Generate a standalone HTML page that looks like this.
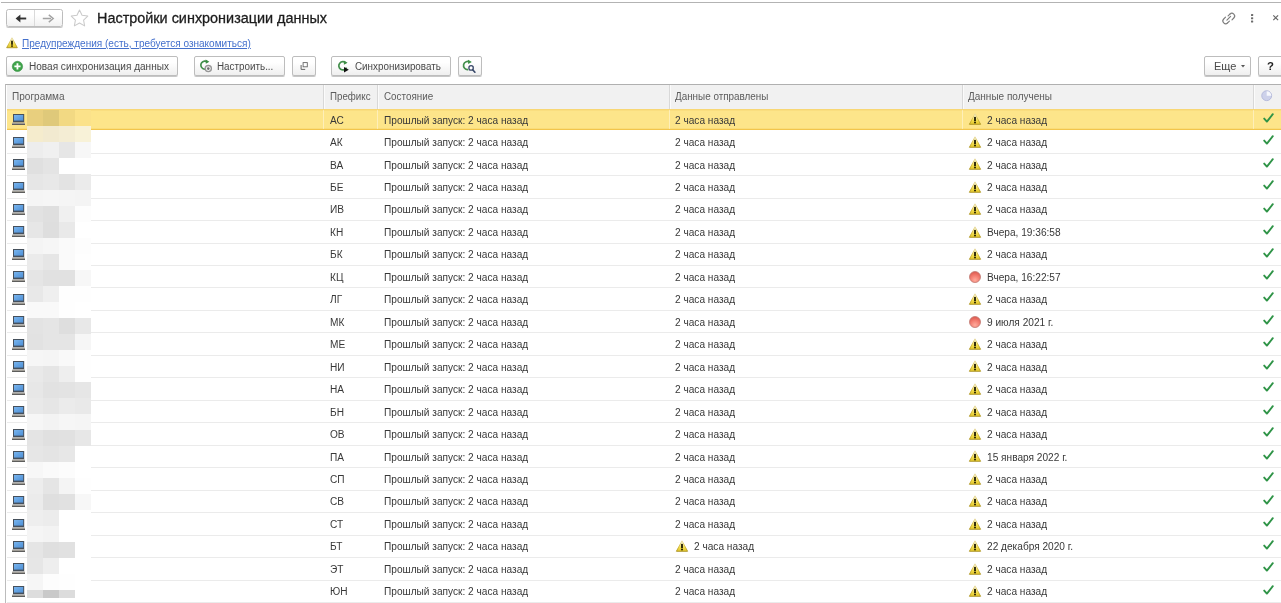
<!DOCTYPE html>
<html lang="ru"><head><meta charset="utf-8"><title>Настройки синхронизации данных</title>
<style>
html,body{margin:0;padding:0;background:#fff;}
body{-webkit-font-smoothing:antialiased;width:1281px;height:603px;overflow:hidden;position:relative;font-family:"Liberation Sans",sans-serif;color:#333;}
svg{display:block;overflow:visible}
#app{position:absolute;left:0;top:0;width:1281px;height:603px;will-change:transform;}
#topline{position:absolute;left:1px;top:2px;width:1280px;height:1px;background:#b3b3b3;}
.btn{position:absolute;box-sizing:border-box;height:19.5px;top:56.3px;border:1px solid #bdbdbd;border-radius:2px;background:linear-gradient(#fff 30%,#efefef);box-shadow:0 1px 0.5px rgba(0,0,0,.22);font-size:10.0px;color:#4a4a4a;line-height:17.5px;white-space:nowrap;}
.btn span{margin-top:0.9px}
.btn span{position:absolute;top:0;transform:scaleX(0.985);transform-origin:0 0;}
.btn svg{position:absolute}
#nav{position:absolute;left:6px;top:9.3px;width:56.5px;height:18px;box-sizing:border-box;border:1px solid #bdbdbd;border-radius:2.5px;background:linear-gradient(#fff 30%,#f1f1f1);box-shadow:0 1px 0.5px rgba(0,0,0,.22);}
#nav i{position:absolute;left:27px;top:0;width:1px;height:16px;background:#dadada;}
#nav svg{position:absolute}
#title{position:absolute;left:97px;top:8.4px;font-size:15.2px;line-height:20px;color:#1c1c1c;-webkit-text-stroke:0.3px #1c1c1c;white-space:nowrap;transform:scaleX(0.9489);transform-origin:0 0;}
#warnlink{position:absolute;left:21.6px;top:36.5px;font-size:10.0px;line-height:13px;color:#4470cc;text-decoration:underline;text-underline-offset:1px;white-space:nowrap;transform:scaleX(1.0035);transform-origin:0 0;}
#tbl{position:absolute;left:5.3px;top:84px;width:1276px;height:519px;border-left:1.4px solid #bcbcbc;border-top:1px solid #b0b0b0;box-sizing:border-box;}
#hdr{position:absolute;left:6.8px;top:85px;width:1275px;height:23.7px;background:#f1f1f1;}
.h{position:absolute;top:89.7px;font-size:10.0px;line-height:14px;color:#5c5c5c;white-space:nowrap;transform:scaleX(0.968);transform-origin:0 0;}
.vl{position:absolute;top:85px;width:1px;height:23.7px;background:#d8d8d8;box-shadow:1px 0 0 rgba(255,255,255,.7);}
.vs{position:absolute;top:110px;width:1px;height:18.5px;background:rgba(255,255,255,.4);}
.row{position:absolute;left:6.8px;width:1275px;height:22.44px;}
.hl{position:absolute;left:6.8px;width:1275px;height:1px;background:#ebebeb;}
#selbg{position:absolute;left:6.8px;top:108.7px;width:1275px;height:21px;background:#fde58a;box-shadow:inset 0 1.4px 0 #f8d774, inset 0 -1.3px 0 #f2c54c;}
.t{position:absolute;top:5.5px;font-size:10.0px;line-height:14px;color:#383838;white-space:nowrap;transform:scaleX(1.012);transform-origin:0 0;}
.pref{left:323.2px} .stat{left:376.9px} .sent{left:668.6px} .sent2{left:687.2px} .recv{left:980.6px}
.ic{position:absolute;width:12px;height:12px;top:5.3px;}
.ic.r{left:962.2px} .ic.s{left:669.2px}
.pc{position:absolute;left:5.2px;top:6.1px;width:13px;height:11px;}
.chk{position:absolute;left:1256.3px;top:4.7px;width:11px;height:10px;}
#blk i{position:absolute;width:16px;display:block;}
</style></head><body><div id="app">
<svg width="0" height="0" style="position:absolute"><defs>
<linearGradient id="wg" x1="0" y1="0" x2="0" y2="1"><stop offset="0" stop-color="#ffffff"/><stop offset="0.3" stop-color="#fbf3b0"/><stop offset="0.65" stop-color="#f1dc4c"/><stop offset="1" stop-color="#e2c427"/></linearGradient><linearGradient id="ws" x1="0" y1="0" x2="0" y2="1"><stop offset="0" stop-color="#e6d9a0"/><stop offset="0.6" stop-color="#d3b634"/><stop offset="1" stop-color="#a8901e"/></linearGradient>
<radialGradient id="rg" cx="0.5" cy="0.78" r="0.8"><stop offset="0" stop-color="#ffab9c"/><stop offset="0.55" stop-color="#f27a6e"/><stop offset="1" stop-color="#d9564c"/></radialGradient>
<linearGradient id="pg" x1="0" y1="0" x2="1" y2="1"><stop offset="0" stop-color="#79b5ee"/><stop offset="1" stop-color="#4d8fd6"/></linearGradient>
</defs></svg>
<div id="topline"></div>
<div id="nav"><i></i>
<svg style="left:7.6px;top:3.5px" width="12" height="9" viewBox="0 0 12 9"><path d="M11.2 4.5H3" fill="none" stroke="#333" stroke-width="1.9"/><path d="M5.4 0.6L0.6 4.5l4.8 3.9z" fill="#333"/></svg>
<svg style="left:35px;top:3.5px" width="12" height="9" viewBox="0 0 12 9"><path d="M0.8 4.5H9" fill="none" stroke="#a2a2a2" stroke-width="1.5"/><path d="M6.8 0.9L11.2 4.5 6.8 8.1" fill="none" stroke="#a2a2a2" stroke-width="1.4"/></svg>
</div>
<svg style="position:absolute;left:70.4px;top:9.4px" width="19" height="17.6" viewBox="0 0 18 17"><path d="M9 1l2.45 5.1 5.55.75-4.05 3.9 1 5.55L9 13.6l-4.95 2.7 1-5.55L1 6.85l5.55-.75z" fill="#fff" stroke="#cacaca" stroke-width="1" stroke-linejoin="round"/></svg>
<div id="title">Настройки синхронизации данных</div>
<svg style="position:absolute;left:5.5px;top:36.6px;width:12px;height:11.4px" viewBox="0 0 12 12"><path d="M6 0.8 L11.6 11.3 H0.4 Z" fill="url(#wg)" stroke="url(#ws)" stroke-width="0.9" stroke-linejoin="round"/><rect x="5.1" y="3.9" width="1.8" height="4.3" fill="#1f1a00"/><rect x="5.1" y="8.8" width="1.8" height="1.5" fill="#1f1a00"/></svg>
<div id="warnlink">Предупреждения (есть, требуется ознакомиться)</div>

<div class="btn" style="left:6px;width:172.3px"><svg style="left:4.9px;top:3.8px" width="10.9" height="10.8" viewBox="0 0 12 12" preserveAspectRatio="none"><circle cx="6" cy="6" r="5.7" fill="#3fa44a" stroke="#2f8a3b" stroke-width="0.6"/><path d="M6 2.6v6.8M2.6 6h6.8" stroke="#fff" stroke-width="2"/></svg><span style="left:21.6px;transform:scaleX(1.004)">Новая синхронизация данных</span></div>

<div class="btn" style="left:194.2px;width:91px"><svg style="left:3.9px;top:2.2px" width="14" height="14" viewBox="0 0 14 14"><path d="M8.6 3A4.1 4.1 0 1 0 9.6 8" fill="none" stroke="#438f4c" stroke-width="1.7"/><path d="M6.6 0.6l3.8 2.2-3.6 2z" fill="#3c8f45"/><circle cx="9.3" cy="9.6" r="3.1" fill="#f4f4f4" stroke="#969696" stroke-width="1.3"/><circle cx="9.3" cy="9.6" r="1.3" fill="#6a6a6a"/></svg><span style="left:21.9px">Настроить...</span></div>

<div class="btn" style="left:292px;width:24px"><svg style="left:7px;top:4.4px" width="9" height="9" viewBox="0 0 9 9"><rect x="3.1" y="0.6" width="4.2" height="4.2" fill="#fff" stroke="#666" stroke-width="0.9"/><path d="M1.1 3v4.4h4.1" fill="none" stroke="#666" stroke-width="1"/></svg></div>

<div class="btn" style="left:330.7px;width:120.2px"><svg style="left:4.9px;top:2.8px" width="13" height="13" viewBox="0 0 13 13"><path d="M8.9 3A4.1 4.1 0 1 0 9.6 7.6" fill="none" stroke="#438f4c" stroke-width="1.7"/><path d="M6.8 0.4l3.8 2.4-3.7 2z" fill="#3c8f45"/><path d="M7 7.1l4.8 2.6-4.8 2.7z" fill="#111"/></svg><span style="left:23.3px">Синхронизировать</span></div>

<div class="btn" style="left:458px;width:23.6px"><svg style="left:2.4px;top:2px" width="15" height="15" viewBox="0 0 15 15"><path d="M9 3.2A4.1 4.1 0 1 0 7.2 10.6" fill="none" stroke="#438f4c" stroke-width="1.7"/><path d="M7 0.8l3.8 2.2-3.6 2z" fill="#3c8f45"/><circle cx="10.1" cy="8.9" r="2.2" fill="#fff" stroke="#39496a" stroke-width="1.3"/><path d="M11.7 10.7l2.2 2.5" stroke="#39496a" stroke-width="1.7" stroke-linecap="round"/></svg></div>

<div class="btn" style="left:1203.5px;width:47px"><span style="left:9.6px;transform:scaleX(1.1)">Еще</span><svg style="left:36.4px;top:8.2px" width="4" height="2.4" viewBox="0 0 5 3"><path d="M0 0h5L2.5 3z" fill="#555"/></svg></div>
<div class="btn" style="left:1257.7px;width:26px"><span style="left:8px;font-weight:bold;font-size:11.5px;color:#222">?</span></div>

<svg style="position:absolute;left:1222px;top:11.5px" width="13.5" height="13" viewBox="0 0 13.5 13"><g fill="none" stroke="#7d7d7d" stroke-width="1.15" stroke-linecap="round"><path d="M5.6 10.9A2.75 2.75 0 0 1 1.7 7L3.5 5.2"/><path d="M7.4 9.1L5.6 10.9" /><path d="M7.9 2.1A2.75 2.75 0 0 1 11.8 6L10 7.8"/><path d="M6.1 3.9L7.9 2.1"/><path d="M4.9 8.1L8.6 4.4"/></g></svg>
<svg style="position:absolute;left:1250.8px;top:13.9px" width="2.2" height="8.6" viewBox="0 0 2.2 8.6"><rect x="0" y="0" width="2.2" height="2.1" rx=".6" fill="#6c6c6c"/><rect x="0" y="3.25" width="2.2" height="2.1" rx=".6" fill="#6c6c6c"/><rect x="0" y="6.5" width="2.2" height="2.1" rx=".6" fill="#6c6c6c"/></svg>
<svg style="position:absolute;left:1272.8px;top:15.3px" width="5.4" height="5.4" viewBox="0 0 5.4 5.4"><path d="M0.3 0.3l4.8 4.8M5.1 0.3L0.3 5.1" stroke="#666" stroke-width="1.2"/></svg>

<div id="tbl"></div>
<div id="hdr"></div>
<div class="h" style="left:12.4px;transform:scaleX(1.004)">Программа</div><div class="h" style="left:330px;transform:scaleX(.975)">Префикс</div><div class="h" style="left:383.6px;transform:scaleX(.986)">Состояние</div><div class="h" style="left:675.4px;transform:scaleX(.987)">Данные отправлены</div><div class="h" style="left:968.4px;transform:scaleX(1.001)">Данные получены</div>
<svg style="position:absolute;left:1261.4px;top:90.2px" width="11.4" height="11.4" viewBox="0 0 12 12"><circle cx="6" cy="6" r="5.2" fill="#cdd1ea" stroke="#b4b9da" stroke-width="1"/><path d="M6 6V1.2A4.8 4.8 0 0 1 10.8 6z" fill="#f6f7fc"/></svg>
<div id="selbg"></div>
<div class="row sel" style="top:108.07px"><svg class="pc" viewBox="0 0 13 11"><rect x="1" y="0" width="11.2" height="8.4" fill="#46505c"/><rect x="2" y="1" width="9.2" height="5.6" fill="url(#pg)"/><rect x="0" y="8.6" width="13" height="2.3" fill="#aaa69f"/><rect x="0" y="9.9" width="13" height="1" fill="#555"/></svg><span class="t pref">АС</span><span class="t stat">Прошлый запуск: 2 часа назад</span><span class="t sent">2 часа назад</span><svg class="ic r" viewBox="0 0 12 12"><path d="M6 0.8 L11.6 11.3 H0.4 Z" fill="url(#wg)" stroke="url(#ws)" stroke-width="0.9" stroke-linejoin="round"/><rect x="5.1" y="3.9" width="1.8" height="4.3" fill="#1f1a00"/><rect x="5.1" y="8.8" width="1.8" height="1.5" fill="#1f1a00"/></svg><span class="t recv">2 часа назад</span><svg class="chk" viewBox="0 0 11 10"><path d="M1.2 5.6 L3.9 8.6 L9.8 1.2" fill="none" stroke="#2f9447" stroke-width="1.9" stroke-linecap="round" stroke-linejoin="round"/></svg></div>
<div class="row" style="top:130.53px"><svg class="pc" viewBox="0 0 13 11"><rect x="1" y="0" width="11.2" height="8.4" fill="#46505c"/><rect x="2" y="1" width="9.2" height="5.6" fill="url(#pg)"/><rect x="0" y="8.6" width="13" height="2.3" fill="#aaa69f"/><rect x="0" y="9.9" width="13" height="1" fill="#555"/></svg><span class="t pref">АК</span><span class="t stat">Прошлый запуск: 2 часа назад</span><span class="t sent">2 часа назад</span><svg class="ic r" viewBox="0 0 12 12"><path d="M6 0.8 L11.6 11.3 H0.4 Z" fill="url(#wg)" stroke="url(#ws)" stroke-width="0.9" stroke-linejoin="round"/><rect x="5.1" y="3.9" width="1.8" height="4.3" fill="#1f1a00"/><rect x="5.1" y="8.8" width="1.8" height="1.5" fill="#1f1a00"/></svg><span class="t recv">2 часа назад</span><svg class="chk" viewBox="0 0 11 10"><path d="M1.2 5.6 L3.9 8.6 L9.8 1.2" fill="none" stroke="#2f9447" stroke-width="1.9" stroke-linecap="round" stroke-linejoin="round"/></svg></div>
<div class="row" style="top:153.00px"><svg class="pc" viewBox="0 0 13 11"><rect x="1" y="0" width="11.2" height="8.4" fill="#46505c"/><rect x="2" y="1" width="9.2" height="5.6" fill="url(#pg)"/><rect x="0" y="8.6" width="13" height="2.3" fill="#aaa69f"/><rect x="0" y="9.9" width="13" height="1" fill="#555"/></svg><span class="t pref">ВА</span><span class="t stat">Прошлый запуск: 2 часа назад</span><span class="t sent">2 часа назад</span><svg class="ic r" viewBox="0 0 12 12"><path d="M6 0.8 L11.6 11.3 H0.4 Z" fill="url(#wg)" stroke="url(#ws)" stroke-width="0.9" stroke-linejoin="round"/><rect x="5.1" y="3.9" width="1.8" height="4.3" fill="#1f1a00"/><rect x="5.1" y="8.8" width="1.8" height="1.5" fill="#1f1a00"/></svg><span class="t recv">2 часа назад</span><svg class="chk" viewBox="0 0 11 10"><path d="M1.2 5.6 L3.9 8.6 L9.8 1.2" fill="none" stroke="#2f9447" stroke-width="1.9" stroke-linecap="round" stroke-linejoin="round"/></svg></div>
<div class="row" style="top:175.46px"><svg class="pc" viewBox="0 0 13 11"><rect x="1" y="0" width="11.2" height="8.4" fill="#46505c"/><rect x="2" y="1" width="9.2" height="5.6" fill="url(#pg)"/><rect x="0" y="8.6" width="13" height="2.3" fill="#aaa69f"/><rect x="0" y="9.9" width="13" height="1" fill="#555"/></svg><span class="t pref">БЕ</span><span class="t stat">Прошлый запуск: 2 часа назад</span><span class="t sent">2 часа назад</span><svg class="ic r" viewBox="0 0 12 12"><path d="M6 0.8 L11.6 11.3 H0.4 Z" fill="url(#wg)" stroke="url(#ws)" stroke-width="0.9" stroke-linejoin="round"/><rect x="5.1" y="3.9" width="1.8" height="4.3" fill="#1f1a00"/><rect x="5.1" y="8.8" width="1.8" height="1.5" fill="#1f1a00"/></svg><span class="t recv">2 часа назад</span><svg class="chk" viewBox="0 0 11 10"><path d="M1.2 5.6 L3.9 8.6 L9.8 1.2" fill="none" stroke="#2f9447" stroke-width="1.9" stroke-linecap="round" stroke-linejoin="round"/></svg></div>
<div class="row" style="top:197.93px"><svg class="pc" viewBox="0 0 13 11"><rect x="1" y="0" width="11.2" height="8.4" fill="#46505c"/><rect x="2" y="1" width="9.2" height="5.6" fill="url(#pg)"/><rect x="0" y="8.6" width="13" height="2.3" fill="#aaa69f"/><rect x="0" y="9.9" width="13" height="1" fill="#555"/></svg><span class="t pref">ИВ</span><span class="t stat">Прошлый запуск: 2 часа назад</span><span class="t sent">2 часа назад</span><svg class="ic r" viewBox="0 0 12 12"><path d="M6 0.8 L11.6 11.3 H0.4 Z" fill="url(#wg)" stroke="url(#ws)" stroke-width="0.9" stroke-linejoin="round"/><rect x="5.1" y="3.9" width="1.8" height="4.3" fill="#1f1a00"/><rect x="5.1" y="8.8" width="1.8" height="1.5" fill="#1f1a00"/></svg><span class="t recv">2 часа назад</span><svg class="chk" viewBox="0 0 11 10"><path d="M1.2 5.6 L3.9 8.6 L9.8 1.2" fill="none" stroke="#2f9447" stroke-width="1.9" stroke-linecap="round" stroke-linejoin="round"/></svg></div>
<div class="row" style="top:220.39px"><svg class="pc" viewBox="0 0 13 11"><rect x="1" y="0" width="11.2" height="8.4" fill="#46505c"/><rect x="2" y="1" width="9.2" height="5.6" fill="url(#pg)"/><rect x="0" y="8.6" width="13" height="2.3" fill="#aaa69f"/><rect x="0" y="9.9" width="13" height="1" fill="#555"/></svg><span class="t pref">КН</span><span class="t stat">Прошлый запуск: 2 часа назад</span><span class="t sent">2 часа назад</span><svg class="ic r" viewBox="0 0 12 12"><path d="M6 0.8 L11.6 11.3 H0.4 Z" fill="url(#wg)" stroke="url(#ws)" stroke-width="0.9" stroke-linejoin="round"/><rect x="5.1" y="3.9" width="1.8" height="4.3" fill="#1f1a00"/><rect x="5.1" y="8.8" width="1.8" height="1.5" fill="#1f1a00"/></svg><span class="t recv">Вчера, 19:36:58</span><svg class="chk" viewBox="0 0 11 10"><path d="M1.2 5.6 L3.9 8.6 L9.8 1.2" fill="none" stroke="#2f9447" stroke-width="1.9" stroke-linecap="round" stroke-linejoin="round"/></svg></div>
<div class="row" style="top:242.86px"><svg class="pc" viewBox="0 0 13 11"><rect x="1" y="0" width="11.2" height="8.4" fill="#46505c"/><rect x="2" y="1" width="9.2" height="5.6" fill="url(#pg)"/><rect x="0" y="8.6" width="13" height="2.3" fill="#aaa69f"/><rect x="0" y="9.9" width="13" height="1" fill="#555"/></svg><span class="t pref">БК</span><span class="t stat">Прошлый запуск: 2 часа назад</span><span class="t sent">2 часа назад</span><svg class="ic r" viewBox="0 0 12 12"><path d="M6 0.8 L11.6 11.3 H0.4 Z" fill="url(#wg)" stroke="url(#ws)" stroke-width="0.9" stroke-linejoin="round"/><rect x="5.1" y="3.9" width="1.8" height="4.3" fill="#1f1a00"/><rect x="5.1" y="8.8" width="1.8" height="1.5" fill="#1f1a00"/></svg><span class="t recv">2 часа назад</span><svg class="chk" viewBox="0 0 11 10"><path d="M1.2 5.6 L3.9 8.6 L9.8 1.2" fill="none" stroke="#2f9447" stroke-width="1.9" stroke-linecap="round" stroke-linejoin="round"/></svg></div>
<div class="row" style="top:265.32px"><svg class="pc" viewBox="0 0 13 11"><rect x="1" y="0" width="11.2" height="8.4" fill="#46505c"/><rect x="2" y="1" width="9.2" height="5.6" fill="url(#pg)"/><rect x="0" y="8.6" width="13" height="2.3" fill="#aaa69f"/><rect x="0" y="9.9" width="13" height="1" fill="#555"/></svg><span class="t pref">КЦ</span><span class="t stat">Прошлый запуск: 2 часа назад</span><span class="t sent">2 часа назад</span><svg class="ic r" viewBox="0 0 12 12"><circle cx="6" cy="6" r="5.5" fill="url(#rg)" stroke="#bf7a72" stroke-width="0.8"/></svg><span class="t recv">Вчера, 16:22:57</span><svg class="chk" viewBox="0 0 11 10"><path d="M1.2 5.6 L3.9 8.6 L9.8 1.2" fill="none" stroke="#2f9447" stroke-width="1.9" stroke-linecap="round" stroke-linejoin="round"/></svg></div>
<div class="row" style="top:287.79px"><svg class="pc" viewBox="0 0 13 11"><rect x="1" y="0" width="11.2" height="8.4" fill="#46505c"/><rect x="2" y="1" width="9.2" height="5.6" fill="url(#pg)"/><rect x="0" y="8.6" width="13" height="2.3" fill="#aaa69f"/><rect x="0" y="9.9" width="13" height="1" fill="#555"/></svg><span class="t pref">ЛГ</span><span class="t stat">Прошлый запуск: 2 часа назад</span><span class="t sent">2 часа назад</span><svg class="ic r" viewBox="0 0 12 12"><path d="M6 0.8 L11.6 11.3 H0.4 Z" fill="url(#wg)" stroke="url(#ws)" stroke-width="0.9" stroke-linejoin="round"/><rect x="5.1" y="3.9" width="1.8" height="4.3" fill="#1f1a00"/><rect x="5.1" y="8.8" width="1.8" height="1.5" fill="#1f1a00"/></svg><span class="t recv">2 часа назад</span><svg class="chk" viewBox="0 0 11 10"><path d="M1.2 5.6 L3.9 8.6 L9.8 1.2" fill="none" stroke="#2f9447" stroke-width="1.9" stroke-linecap="round" stroke-linejoin="round"/></svg></div>
<div class="row" style="top:310.25px"><svg class="pc" viewBox="0 0 13 11"><rect x="1" y="0" width="11.2" height="8.4" fill="#46505c"/><rect x="2" y="1" width="9.2" height="5.6" fill="url(#pg)"/><rect x="0" y="8.6" width="13" height="2.3" fill="#aaa69f"/><rect x="0" y="9.9" width="13" height="1" fill="#555"/></svg><span class="t pref">МК</span><span class="t stat">Прошлый запуск: 2 часа назад</span><span class="t sent">2 часа назад</span><svg class="ic r" viewBox="0 0 12 12"><circle cx="6" cy="6" r="5.5" fill="url(#rg)" stroke="#bf7a72" stroke-width="0.8"/></svg><span class="t recv">9 июля 2021 г.</span><svg class="chk" viewBox="0 0 11 10"><path d="M1.2 5.6 L3.9 8.6 L9.8 1.2" fill="none" stroke="#2f9447" stroke-width="1.9" stroke-linecap="round" stroke-linejoin="round"/></svg></div>
<div class="row" style="top:332.72px"><svg class="pc" viewBox="0 0 13 11"><rect x="1" y="0" width="11.2" height="8.4" fill="#46505c"/><rect x="2" y="1" width="9.2" height="5.6" fill="url(#pg)"/><rect x="0" y="8.6" width="13" height="2.3" fill="#aaa69f"/><rect x="0" y="9.9" width="13" height="1" fill="#555"/></svg><span class="t pref">МЕ</span><span class="t stat">Прошлый запуск: 2 часа назад</span><span class="t sent">2 часа назад</span><svg class="ic r" viewBox="0 0 12 12"><path d="M6 0.8 L11.6 11.3 H0.4 Z" fill="url(#wg)" stroke="url(#ws)" stroke-width="0.9" stroke-linejoin="round"/><rect x="5.1" y="3.9" width="1.8" height="4.3" fill="#1f1a00"/><rect x="5.1" y="8.8" width="1.8" height="1.5" fill="#1f1a00"/></svg><span class="t recv">2 часа назад</span><svg class="chk" viewBox="0 0 11 10"><path d="M1.2 5.6 L3.9 8.6 L9.8 1.2" fill="none" stroke="#2f9447" stroke-width="1.9" stroke-linecap="round" stroke-linejoin="round"/></svg></div>
<div class="row" style="top:355.19px"><svg class="pc" viewBox="0 0 13 11"><rect x="1" y="0" width="11.2" height="8.4" fill="#46505c"/><rect x="2" y="1" width="9.2" height="5.6" fill="url(#pg)"/><rect x="0" y="8.6" width="13" height="2.3" fill="#aaa69f"/><rect x="0" y="9.9" width="13" height="1" fill="#555"/></svg><span class="t pref">НИ</span><span class="t stat">Прошлый запуск: 2 часа назад</span><span class="t sent">2 часа назад</span><svg class="ic r" viewBox="0 0 12 12"><path d="M6 0.8 L11.6 11.3 H0.4 Z" fill="url(#wg)" stroke="url(#ws)" stroke-width="0.9" stroke-linejoin="round"/><rect x="5.1" y="3.9" width="1.8" height="4.3" fill="#1f1a00"/><rect x="5.1" y="8.8" width="1.8" height="1.5" fill="#1f1a00"/></svg><span class="t recv">2 часа назад</span><svg class="chk" viewBox="0 0 11 10"><path d="M1.2 5.6 L3.9 8.6 L9.8 1.2" fill="none" stroke="#2f9447" stroke-width="1.9" stroke-linecap="round" stroke-linejoin="round"/></svg></div>
<div class="row" style="top:377.65px"><svg class="pc" viewBox="0 0 13 11"><rect x="1" y="0" width="11.2" height="8.4" fill="#46505c"/><rect x="2" y="1" width="9.2" height="5.6" fill="url(#pg)"/><rect x="0" y="8.6" width="13" height="2.3" fill="#aaa69f"/><rect x="0" y="9.9" width="13" height="1" fill="#555"/></svg><span class="t pref">НА</span><span class="t stat">Прошлый запуск: 2 часа назад</span><span class="t sent">2 часа назад</span><svg class="ic r" viewBox="0 0 12 12"><path d="M6 0.8 L11.6 11.3 H0.4 Z" fill="url(#wg)" stroke="url(#ws)" stroke-width="0.9" stroke-linejoin="round"/><rect x="5.1" y="3.9" width="1.8" height="4.3" fill="#1f1a00"/><rect x="5.1" y="8.8" width="1.8" height="1.5" fill="#1f1a00"/></svg><span class="t recv">2 часа назад</span><svg class="chk" viewBox="0 0 11 10"><path d="M1.2 5.6 L3.9 8.6 L9.8 1.2" fill="none" stroke="#2f9447" stroke-width="1.9" stroke-linecap="round" stroke-linejoin="round"/></svg></div>
<div class="row" style="top:400.12px"><svg class="pc" viewBox="0 0 13 11"><rect x="1" y="0" width="11.2" height="8.4" fill="#46505c"/><rect x="2" y="1" width="9.2" height="5.6" fill="url(#pg)"/><rect x="0" y="8.6" width="13" height="2.3" fill="#aaa69f"/><rect x="0" y="9.9" width="13" height="1" fill="#555"/></svg><span class="t pref">БН</span><span class="t stat">Прошлый запуск: 2 часа назад</span><span class="t sent">2 часа назад</span><svg class="ic r" viewBox="0 0 12 12"><path d="M6 0.8 L11.6 11.3 H0.4 Z" fill="url(#wg)" stroke="url(#ws)" stroke-width="0.9" stroke-linejoin="round"/><rect x="5.1" y="3.9" width="1.8" height="4.3" fill="#1f1a00"/><rect x="5.1" y="8.8" width="1.8" height="1.5" fill="#1f1a00"/></svg><span class="t recv">2 часа назад</span><svg class="chk" viewBox="0 0 11 10"><path d="M1.2 5.6 L3.9 8.6 L9.8 1.2" fill="none" stroke="#2f9447" stroke-width="1.9" stroke-linecap="round" stroke-linejoin="round"/></svg></div>
<div class="row" style="top:422.58px"><svg class="pc" viewBox="0 0 13 11"><rect x="1" y="0" width="11.2" height="8.4" fill="#46505c"/><rect x="2" y="1" width="9.2" height="5.6" fill="url(#pg)"/><rect x="0" y="8.6" width="13" height="2.3" fill="#aaa69f"/><rect x="0" y="9.9" width="13" height="1" fill="#555"/></svg><span class="t pref">ОВ</span><span class="t stat">Прошлый запуск: 2 часа назад</span><span class="t sent">2 часа назад</span><svg class="ic r" viewBox="0 0 12 12"><path d="M6 0.8 L11.6 11.3 H0.4 Z" fill="url(#wg)" stroke="url(#ws)" stroke-width="0.9" stroke-linejoin="round"/><rect x="5.1" y="3.9" width="1.8" height="4.3" fill="#1f1a00"/><rect x="5.1" y="8.8" width="1.8" height="1.5" fill="#1f1a00"/></svg><span class="t recv">2 часа назад</span><svg class="chk" viewBox="0 0 11 10"><path d="M1.2 5.6 L3.9 8.6 L9.8 1.2" fill="none" stroke="#2f9447" stroke-width="1.9" stroke-linecap="round" stroke-linejoin="round"/></svg></div>
<div class="row" style="top:445.05px"><svg class="pc" viewBox="0 0 13 11"><rect x="1" y="0" width="11.2" height="8.4" fill="#46505c"/><rect x="2" y="1" width="9.2" height="5.6" fill="url(#pg)"/><rect x="0" y="8.6" width="13" height="2.3" fill="#aaa69f"/><rect x="0" y="9.9" width="13" height="1" fill="#555"/></svg><span class="t pref">ПА</span><span class="t stat">Прошлый запуск: 2 часа назад</span><span class="t sent">2 часа назад</span><svg class="ic r" viewBox="0 0 12 12"><path d="M6 0.8 L11.6 11.3 H0.4 Z" fill="url(#wg)" stroke="url(#ws)" stroke-width="0.9" stroke-linejoin="round"/><rect x="5.1" y="3.9" width="1.8" height="4.3" fill="#1f1a00"/><rect x="5.1" y="8.8" width="1.8" height="1.5" fill="#1f1a00"/></svg><span class="t recv">15 января 2022 г.</span><svg class="chk" viewBox="0 0 11 10"><path d="M1.2 5.6 L3.9 8.6 L9.8 1.2" fill="none" stroke="#2f9447" stroke-width="1.9" stroke-linecap="round" stroke-linejoin="round"/></svg></div>
<div class="row" style="top:467.51px"><svg class="pc" viewBox="0 0 13 11"><rect x="1" y="0" width="11.2" height="8.4" fill="#46505c"/><rect x="2" y="1" width="9.2" height="5.6" fill="url(#pg)"/><rect x="0" y="8.6" width="13" height="2.3" fill="#aaa69f"/><rect x="0" y="9.9" width="13" height="1" fill="#555"/></svg><span class="t pref">СП</span><span class="t stat">Прошлый запуск: 2 часа назад</span><span class="t sent">2 часа назад</span><svg class="ic r" viewBox="0 0 12 12"><path d="M6 0.8 L11.6 11.3 H0.4 Z" fill="url(#wg)" stroke="url(#ws)" stroke-width="0.9" stroke-linejoin="round"/><rect x="5.1" y="3.9" width="1.8" height="4.3" fill="#1f1a00"/><rect x="5.1" y="8.8" width="1.8" height="1.5" fill="#1f1a00"/></svg><span class="t recv">2 часа назад</span><svg class="chk" viewBox="0 0 11 10"><path d="M1.2 5.6 L3.9 8.6 L9.8 1.2" fill="none" stroke="#2f9447" stroke-width="1.9" stroke-linecap="round" stroke-linejoin="round"/></svg></div>
<div class="row" style="top:489.97px"><svg class="pc" viewBox="0 0 13 11"><rect x="1" y="0" width="11.2" height="8.4" fill="#46505c"/><rect x="2" y="1" width="9.2" height="5.6" fill="url(#pg)"/><rect x="0" y="8.6" width="13" height="2.3" fill="#aaa69f"/><rect x="0" y="9.9" width="13" height="1" fill="#555"/></svg><span class="t pref">СВ</span><span class="t stat">Прошлый запуск: 2 часа назад</span><span class="t sent">2 часа назад</span><svg class="ic r" viewBox="0 0 12 12"><path d="M6 0.8 L11.6 11.3 H0.4 Z" fill="url(#wg)" stroke="url(#ws)" stroke-width="0.9" stroke-linejoin="round"/><rect x="5.1" y="3.9" width="1.8" height="4.3" fill="#1f1a00"/><rect x="5.1" y="8.8" width="1.8" height="1.5" fill="#1f1a00"/></svg><span class="t recv">2 часа назад</span><svg class="chk" viewBox="0 0 11 10"><path d="M1.2 5.6 L3.9 8.6 L9.8 1.2" fill="none" stroke="#2f9447" stroke-width="1.9" stroke-linecap="round" stroke-linejoin="round"/></svg></div>
<div class="row" style="top:512.44px"><svg class="pc" viewBox="0 0 13 11"><rect x="1" y="0" width="11.2" height="8.4" fill="#46505c"/><rect x="2" y="1" width="9.2" height="5.6" fill="url(#pg)"/><rect x="0" y="8.6" width="13" height="2.3" fill="#aaa69f"/><rect x="0" y="9.9" width="13" height="1" fill="#555"/></svg><span class="t pref">СТ</span><span class="t stat">Прошлый запуск: 2 часа назад</span><span class="t sent">2 часа назад</span><svg class="ic r" viewBox="0 0 12 12"><path d="M6 0.8 L11.6 11.3 H0.4 Z" fill="url(#wg)" stroke="url(#ws)" stroke-width="0.9" stroke-linejoin="round"/><rect x="5.1" y="3.9" width="1.8" height="4.3" fill="#1f1a00"/><rect x="5.1" y="8.8" width="1.8" height="1.5" fill="#1f1a00"/></svg><span class="t recv">2 часа назад</span><svg class="chk" viewBox="0 0 11 10"><path d="M1.2 5.6 L3.9 8.6 L9.8 1.2" fill="none" stroke="#2f9447" stroke-width="1.9" stroke-linecap="round" stroke-linejoin="round"/></svg></div>
<div class="row" style="top:534.90px"><svg class="pc" viewBox="0 0 13 11"><rect x="1" y="0" width="11.2" height="8.4" fill="#46505c"/><rect x="2" y="1" width="9.2" height="5.6" fill="url(#pg)"/><rect x="0" y="8.6" width="13" height="2.3" fill="#aaa69f"/><rect x="0" y="9.9" width="13" height="1" fill="#555"/></svg><span class="t pref">БТ</span><span class="t stat">Прошлый запуск: 2 часа назад</span><svg class="ic s" viewBox="0 0 12 12"><path d="M6 0.8 L11.6 11.3 H0.4 Z" fill="url(#wg)" stroke="url(#ws)" stroke-width="0.9" stroke-linejoin="round"/><rect x="5.1" y="3.9" width="1.8" height="4.3" fill="#1f1a00"/><rect x="5.1" y="8.8" width="1.8" height="1.5" fill="#1f1a00"/></svg><span class="t sent2">2 часа назад</span><svg class="ic r" viewBox="0 0 12 12"><path d="M6 0.8 L11.6 11.3 H0.4 Z" fill="url(#wg)" stroke="url(#ws)" stroke-width="0.9" stroke-linejoin="round"/><rect x="5.1" y="3.9" width="1.8" height="4.3" fill="#1f1a00"/><rect x="5.1" y="8.8" width="1.8" height="1.5" fill="#1f1a00"/></svg><span class="t recv">22 декабря 2020 г.</span><svg class="chk" viewBox="0 0 11 10"><path d="M1.2 5.6 L3.9 8.6 L9.8 1.2" fill="none" stroke="#2f9447" stroke-width="1.9" stroke-linecap="round" stroke-linejoin="round"/></svg></div>
<div class="row" style="top:557.37px"><svg class="pc" viewBox="0 0 13 11"><rect x="1" y="0" width="11.2" height="8.4" fill="#46505c"/><rect x="2" y="1" width="9.2" height="5.6" fill="url(#pg)"/><rect x="0" y="8.6" width="13" height="2.3" fill="#aaa69f"/><rect x="0" y="9.9" width="13" height="1" fill="#555"/></svg><span class="t pref">ЭТ</span><span class="t stat">Прошлый запуск: 2 часа назад</span><span class="t sent">2 часа назад</span><svg class="ic r" viewBox="0 0 12 12"><path d="M6 0.8 L11.6 11.3 H0.4 Z" fill="url(#wg)" stroke="url(#ws)" stroke-width="0.9" stroke-linejoin="round"/><rect x="5.1" y="3.9" width="1.8" height="4.3" fill="#1f1a00"/><rect x="5.1" y="8.8" width="1.8" height="1.5" fill="#1f1a00"/></svg><span class="t recv">2 часа назад</span><svg class="chk" viewBox="0 0 11 10"><path d="M1.2 5.6 L3.9 8.6 L9.8 1.2" fill="none" stroke="#2f9447" stroke-width="1.9" stroke-linecap="round" stroke-linejoin="round"/></svg></div>
<div class="row" style="top:579.84px"><svg class="pc" viewBox="0 0 13 11"><rect x="1" y="0" width="11.2" height="8.4" fill="#46505c"/><rect x="2" y="1" width="9.2" height="5.6" fill="url(#pg)"/><rect x="0" y="8.6" width="13" height="2.3" fill="#aaa69f"/><rect x="0" y="9.9" width="13" height="1" fill="#555"/></svg><span class="t pref">ЮН</span><span class="t stat">Прошлый запуск: 2 часа назад</span><span class="t sent">2 часа назад</span><svg class="ic r" viewBox="0 0 12 12"><path d="M6 0.8 L11.6 11.3 H0.4 Z" fill="url(#wg)" stroke="url(#ws)" stroke-width="0.9" stroke-linejoin="round"/><rect x="5.1" y="3.9" width="1.8" height="4.3" fill="#1f1a00"/><rect x="5.1" y="8.8" width="1.8" height="1.5" fill="#1f1a00"/></svg><span class="t recv">2 часа назад</span><svg class="chk" viewBox="0 0 11 10"><path d="M1.2 5.6 L3.9 8.6 L9.8 1.2" fill="none" stroke="#2f9447" stroke-width="1.9" stroke-linecap="round" stroke-linejoin="round"/></svg></div>
<div class="hl" style="top:153px"></div><div class="hl" style="top:175px"></div><div class="hl" style="top:198px"></div><div class="hl" style="top:220px"></div><div class="hl" style="top:243px"></div><div class="hl" style="top:265px"></div><div class="hl" style="top:287px"></div><div class="hl" style="top:310px"></div><div class="hl" style="top:332px"></div><div class="hl" style="top:355px"></div><div class="hl" style="top:377px"></div><div class="hl" style="top:400px"></div><div class="hl" style="top:422px"></div><div class="hl" style="top:445px"></div><div class="hl" style="top:467px"></div><div class="hl" style="top:490px"></div><div class="hl" style="top:512px"></div><div class="hl" style="top:535px"></div><div class="hl" style="top:557px"></div><div class="hl" style="top:580px"></div><div class="hl" style="top:602px"></div>
<div class="vl" style="left:323.4px"></div><div class="vl" style="left:376.8px"></div><div class="vl" style="left:669.1px"></div><div class="vl" style="left:962px"></div><div class="vl" style="left:1253px"></div>
<div class="vs" style="left:323.4px"></div><div class="vs" style="left:376.8px"></div><div class="vs" style="left:669.1px"></div><div class="vs" style="left:962px"></div><div class="vs" style="left:1253px"></div>
<div id="blk"><i style="left:27px;top:110px;height:16px;background:rgb(232,207,126)"></i><i style="left:43px;top:110px;height:16px;background:rgb(223,201,122)"></i><i style="left:59px;top:110px;height:16px;background:rgb(242,217,131)"></i><i style="left:75px;top:110px;height:16px;background:rgb(251,226,138)"></i><i style="left:27px;top:126px;height:16px;background:rgb(245,236,205)"></i><i style="left:43px;top:126px;height:16px;background:rgb(242,234,208)"></i><i style="left:59px;top:126px;height:16px;background:rgb(244,237,212)"></i><i style="left:75px;top:126px;height:16px;background:rgb(248,242,216)"></i><i style="left:27px;top:142px;height:16px;background:rgb(237,237,237)"></i><i style="left:43px;top:142px;height:16px;background:rgb(240,240,240)"></i><i style="left:59px;top:142px;height:16px;background:rgb(230,230,230)"></i><i style="left:75px;top:142px;height:16px;background:rgb(247,247,247)"></i><i style="left:27px;top:158px;height:16px;background:rgb(224,224,224)"></i><i style="left:43px;top:158px;height:16px;background:rgb(228,228,228)"></i><i style="left:59px;top:158px;height:16px;background:rgb(255,255,255)"></i><i style="left:75px;top:158px;height:16px;background:rgb(255,255,255)"></i><i style="left:27px;top:174px;height:16px;background:rgb(230,230,230)"></i><i style="left:43px;top:174px;height:16px;background:rgb(232,232,232)"></i><i style="left:59px;top:174px;height:16px;background:rgb(227,227,227)"></i><i style="left:75px;top:174px;height:16px;background:rgb(235,235,235)"></i><i style="left:27px;top:190px;height:16px;background:rgb(245,245,245)"></i><i style="left:43px;top:190px;height:16px;background:rgb(246,246,246)"></i><i style="left:59px;top:190px;height:16px;background:rgb(245,245,245)"></i><i style="left:75px;top:190px;height:16px;background:rgb(244,244,244)"></i><i style="left:27px;top:206px;height:16px;background:rgb(226,226,226)"></i><i style="left:43px;top:206px;height:16px;background:rgb(223,223,223)"></i><i style="left:59px;top:206px;height:16px;background:rgb(240,240,240)"></i><i style="left:75px;top:206px;height:16px;background:rgb(253,253,253)"></i><i style="left:27px;top:222px;height:16px;background:rgb(230,230,230)"></i><i style="left:43px;top:222px;height:16px;background:rgb(222,222,222)"></i><i style="left:59px;top:222px;height:16px;background:rgb(233,233,233)"></i><i style="left:75px;top:222px;height:16px;background:rgb(255,255,255)"></i><i style="left:27px;top:238px;height:16px;background:rgb(244,244,244)"></i><i style="left:43px;top:238px;height:16px;background:rgb(246,246,246)"></i><i style="left:59px;top:238px;height:16px;background:rgb(250,250,250)"></i><i style="left:75px;top:238px;height:16px;background:rgb(253,253,253)"></i><i style="left:27px;top:254px;height:16px;background:rgb(235,235,235)"></i><i style="left:43px;top:254px;height:16px;background:rgb(230,230,230)"></i><i style="left:59px;top:254px;height:16px;background:rgb(250,250,250)"></i><i style="left:75px;top:254px;height:16px;background:rgb(254,254,254)"></i><i style="left:27px;top:270px;height:16px;background:rgb(229,229,229)"></i><i style="left:43px;top:270px;height:16px;background:rgb(225,225,225)"></i><i style="left:59px;top:270px;height:16px;background:rgb(225,225,225)"></i><i style="left:75px;top:270px;height:16px;background:rgb(247,247,247)"></i><i style="left:27px;top:286px;height:16px;background:rgb(232,232,232)"></i><i style="left:43px;top:286px;height:16px;background:rgb(239,239,239)"></i><i style="left:59px;top:286px;height:16px;background:rgb(254,254,254)"></i><i style="left:75px;top:286px;height:16px;background:rgb(254,254,254)"></i><i style="left:27px;top:302px;height:16px;background:rgb(249,249,249)"></i><i style="left:43px;top:302px;height:16px;background:rgb(249,249,249)"></i><i style="left:59px;top:302px;height:16px;background:rgb(254,254,254)"></i><i style="left:75px;top:302px;height:16px;background:rgb(255,255,255)"></i><i style="left:27px;top:318px;height:16px;background:rgb(227,227,227)"></i><i style="left:43px;top:318px;height:16px;background:rgb(229,229,229)"></i><i style="left:59px;top:318px;height:16px;background:rgb(222,222,222)"></i><i style="left:75px;top:318px;height:16px;background:rgb(232,232,232)"></i><i style="left:27px;top:334px;height:16px;background:rgb(226,226,226)"></i><i style="left:43px;top:334px;height:16px;background:rgb(229,229,229)"></i><i style="left:59px;top:334px;height:16px;background:rgb(229,229,229)"></i><i style="left:75px;top:334px;height:16px;background:rgb(246,246,246)"></i><i style="left:27px;top:350px;height:16px;background:rgb(246,246,246)"></i><i style="left:43px;top:350px;height:16px;background:rgb(245,245,245)"></i><i style="left:59px;top:350px;height:16px;background:rgb(249,249,249)"></i><i style="left:75px;top:350px;height:16px;background:rgb(254,254,254)"></i><i style="left:27px;top:366px;height:16px;background:rgb(233,233,233)"></i><i style="left:43px;top:366px;height:16px;background:rgb(229,229,229)"></i><i style="left:59px;top:366px;height:16px;background:rgb(238,238,238)"></i><i style="left:75px;top:366px;height:16px;background:rgb(254,254,254)"></i><i style="left:27px;top:382px;height:16px;background:rgb(231,231,231)"></i><i style="left:43px;top:382px;height:16px;background:rgb(226,226,226)"></i><i style="left:59px;top:382px;height:16px;background:rgb(227,227,227)"></i><i style="left:75px;top:382px;height:16px;background:rgb(230,230,230)"></i><i style="left:27px;top:398px;height:16px;background:rgb(233,233,233)"></i><i style="left:43px;top:398px;height:16px;background:rgb(230,230,230)"></i><i style="left:59px;top:398px;height:16px;background:rgb(235,235,235)"></i><i style="left:75px;top:398px;height:16px;background:rgb(233,233,233)"></i><i style="left:27px;top:414px;height:16px;background:rgb(246,246,246)"></i><i style="left:43px;top:414px;height:16px;background:rgb(243,243,243)"></i><i style="left:59px;top:414px;height:16px;background:rgb(246,246,246)"></i><i style="left:75px;top:414px;height:16px;background:rgb(245,245,245)"></i><i style="left:27px;top:430px;height:16px;background:rgb(228,228,228)"></i><i style="left:43px;top:430px;height:16px;background:rgb(224,224,224)"></i><i style="left:59px;top:430px;height:16px;background:rgb(225,225,225)"></i><i style="left:75px;top:430px;height:16px;background:rgb(231,231,231)"></i><i style="left:27px;top:446px;height:16px;background:rgb(230,230,230)"></i><i style="left:43px;top:446px;height:16px;background:rgb(228,228,228)"></i><i style="left:59px;top:446px;height:16px;background:rgb(231,231,231)"></i><i style="left:75px;top:446px;height:16px;background:rgb(255,255,255)"></i><i style="left:27px;top:462px;height:16px;background:rgb(247,247,247)"></i><i style="left:43px;top:462px;height:16px;background:rgb(250,250,250)"></i><i style="left:59px;top:462px;height:16px;background:rgb(252,252,252)"></i><i style="left:75px;top:462px;height:16px;background:rgb(255,255,255)"></i><i style="left:27px;top:478px;height:16px;background:rgb(237,237,237)"></i><i style="left:43px;top:478px;height:16px;background:rgb(229,229,229)"></i><i style="left:59px;top:478px;height:16px;background:rgb(244,244,244)"></i><i style="left:75px;top:478px;height:16px;background:rgb(254,254,254)"></i><i style="left:27px;top:494px;height:16px;background:rgb(235,235,235)"></i><i style="left:43px;top:494px;height:16px;background:rgb(223,223,223)"></i><i style="left:59px;top:494px;height:16px;background:rgb(225,225,225)"></i><i style="left:75px;top:494px;height:16px;background:rgb(247,247,247)"></i><i style="left:27px;top:510px;height:16px;background:rgb(238,238,238)"></i><i style="left:43px;top:510px;height:16px;background:rgb(236,236,236)"></i><i style="left:59px;top:510px;height:16px;background:rgb(255,255,255)"></i><i style="left:75px;top:510px;height:16px;background:rgb(255,255,255)"></i><i style="left:27px;top:526px;height:16px;background:rgb(245,245,245)"></i><i style="left:43px;top:526px;height:16px;background:rgb(243,243,243)"></i><i style="left:59px;top:526px;height:16px;background:rgb(255,255,255)"></i><i style="left:75px;top:526px;height:16px;background:rgb(255,255,255)"></i><i style="left:27px;top:542px;height:16px;background:rgb(229,229,229)"></i><i style="left:43px;top:542px;height:16px;background:rgb(223,223,223)"></i><i style="left:59px;top:542px;height:16px;background:rgb(225,225,225)"></i><i style="left:75px;top:542px;height:16px;background:rgb(255,255,255)"></i><i style="left:27px;top:558px;height:16px;background:rgb(230,230,230)"></i><i style="left:43px;top:558px;height:16px;background:rgb(238,238,238)"></i><i style="left:59px;top:558px;height:16px;background:rgb(255,255,255)"></i><i style="left:75px;top:558px;height:16px;background:rgb(255,255,255)"></i><i style="left:27px;top:574px;height:16px;background:rgb(246,246,246)"></i><i style="left:43px;top:574px;height:16px;background:rgb(253,253,253)"></i><i style="left:59px;top:574px;height:16px;background:rgb(254,254,254)"></i><i style="left:75px;top:574px;height:16px;background:rgb(255,255,255)"></i><i style="left:27px;top:590px;height:8px;background:rgb(221,221,221)"></i><i style="left:43px;top:590px;height:8px;background:rgb(201,201,201)"></i><i style="left:59px;top:590px;height:8px;background:rgb(220,220,220)"></i><i style="left:75px;top:590px;height:8px;background:rgb(255,255,255)"></i></div>
</div></body></html>
